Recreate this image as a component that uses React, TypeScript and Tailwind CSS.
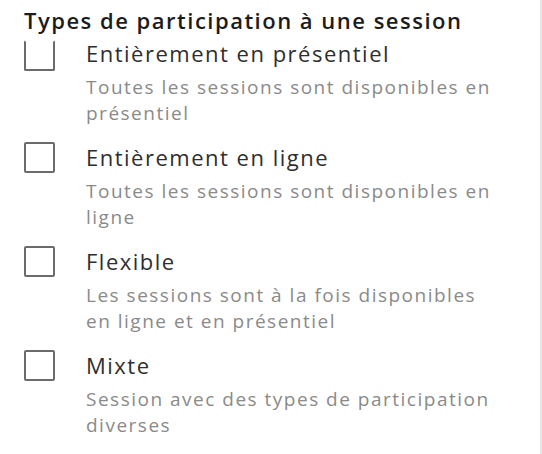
const OPTIONS = [
  {
    label: "Entièrement en présentiel",
    hint: "Toutes les sessions sont disponibles en présentiel",
  },
  {
    label: "Entièrement en ligne",
    hint: "Toutes les sessions sont disponibles en ligne",
  },
  {
    label: "Flexible",
    hint: "Les sessions sont à la fois disponibles en ligne et en présentiel",
  },
  {
    label: "Mixte",
    hint: "Session avec des types de participation diverses",
  },
];

export default function App() {
  return (
    <div className="flex h-[454px] w-[542px] bg-white font-['Open_Sans',sans-serif]">
      <div className="flex-1 pl-[24px]">
        <h2 className="pt-[5px] text-[22px] font-semibold leading-[31px] tracking-[1.5px] text-[#1c1c1c]">
          Types de participation à une session
        </h2>
        <ul className="mt-[2px] flex flex-col">
          {OPTIONS.map((o, i) => (
            <li key={o.label} className={i === 0 ? "" : "mt-[16px]"}>
              <label className="flex items-center gap-[31px]">
                <span
                  className={
                    i === 0
                      ? "h-[31px] w-[31px] shrink-0 translate-y-[2px] rounded-[2px] border-2 border-[#6b6b6b] border-t-transparent"
                      : "h-[31px] w-[31px] shrink-0 rounded-[2px] border-2 border-[#6b6b6b]"
                  }
                />
                <span className="text-[22px] leading-[31px] tracking-[1.5px] text-[#2e2e2e]">{o.label}</span>
              </label>
              <p className="mt-[5px] w-[472px] pl-[62px] text-[19px] leading-[26px] tracking-[1.5px] text-[#8a8a8a]">
                {o.hint}
              </p>
            </li>
          ))}
        </ul>
      </div>
      <div className="w-[2px] bg-[#e6e6e6]" />
    </div>
  );
}
